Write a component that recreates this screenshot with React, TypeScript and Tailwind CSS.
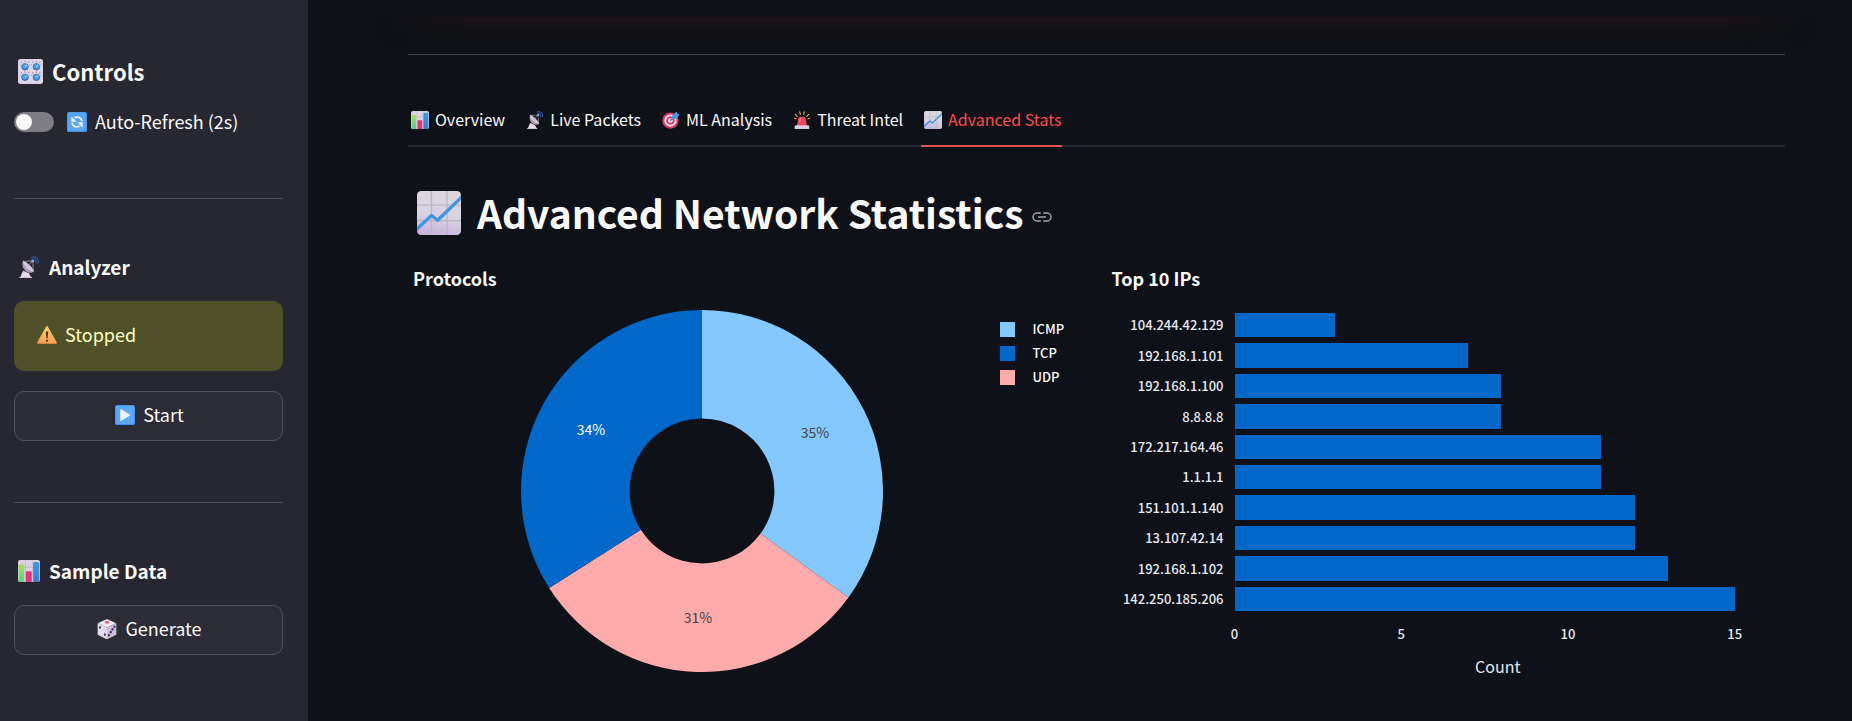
import React, { useState } from "react";

type IconProps = { className?: string };

function ChartUpIcon({ className }: IconProps) {
  return (
    <svg viewBox="0 0 32 32" className={className} aria-hidden="true">
      <defs>
        <linearGradient id="upBg" x1="0.6" y1="0" x2="0.4" y2="1">
          <stop offset="0" stopColor="#dcd8de" />
          <stop offset="0.6" stopColor="#d9d0e4" />
          <stop offset="1" stopColor="#c9b4dc" />
        </linearGradient>
        <clipPath id="upClip"><rect width="32" height="32" rx="3" /></clipPath>
      </defs>
      <g clipPath="url(#upClip)">
        <rect width="32" height="32" fill="url(#upBg)" />
        <path d="M10.5 0V32M21.8 0V32M0 10.3H32M0 21.6H32" stroke="#beb4c6" strokeWidth="1" />
        <path d="M-1 28.5L10.5 17.8L15 21.3L33 4" fill="none" stroke="#3d97dc" strokeWidth="2.4" strokeLinejoin="round" />
      </g>
    </svg>
  );
}

function BarsIcon({ className }: IconProps) {
  return (
    <svg viewBox="0 0 32 32" className={className} aria-hidden="true">
      <defs>
        <linearGradient id="barGreen" x1="0" y1="0" x2="0" y2="1">
          <stop offset="0" stopColor="#a5e14d" /><stop offset="1" stopColor="#4fd98c" />
        </linearGradient>
        <linearGradient id="barBlue" x1="0" y1="0" x2="0" y2="1">
          <stop offset="0" stopColor="#3b9ce2" /><stop offset="1" stopColor="#3f7bd0" />
        </linearGradient>
      </defs>
      <rect width="32" height="32" rx="3" fill="#dcd2e2" />
      <path d="M11 0V32M21.5 0V32M0 10.5H32" stroke="#bdb2c6" strokeWidth="1" />
      <path d="M1 8.5q0-1.5 1.500-1.500h5q1.500 0 1.500 1.500V32H3q-2 0-2-2z" fill="url(#barGreen)" />
      <path d="M11.500 18q0-1.500 1.500-1.500h5.500q1.500 0 1.500 1.500V32h-8.500z" fill="#e0347c" />
      <path d="M22 5q0-2 2-2h5q2 0 2 2v25q0 2-2 2h-7z" fill="url(#barBlue)" />
    </svg>
  );
}

function KnobsIcon({ className }: IconProps) {
  const knobs = [[9, 10], [23.5, 10], [9, 23.5], [23.5, 23.5]];
  return (
    <svg viewBox="0 0 32 32" className={className} aria-hidden="true">
      <rect width="32" height="32" rx="3" fill="#ddd0e6" />
      <rect x="1" y="1" width="30" height="30" rx="2.500" fill="#e1d6e8" />
      {knobs.map(([x, y]) => (
        <g key={`${x}-${y}`}>
          <path
            d={`M${x - 4} ${y - 5}l-.8-1.600M${x} ${y - 6}v-1.500M${x + 4} ${y - 5}l.8-1.600M${x - 5.500} ${y - 2}l-1-.8M${x + 5.500} ${y - 2}l1-.8`}
            stroke="#6a5f78" strokeWidth="1"
          />
          <circle cx={x} cy={y} r="4.600" fill="#2f73b8" />
          <circle cx={x} cy={y - 0.6} r="3.500" fill="#4a9ce0" />
          <path d={`M${x} ${y}l2-2`} stroke="#dff0ff" strokeWidth="1.200" strokeLinecap="round" />
        </g>
      ))}
    </svg>
  );
}

function RefreshIcon({ className }: IconProps) {
  return (
    <svg viewBox="0 0 32 32" className={className} aria-hidden="true">
      <rect width="32" height="32" rx="3" fill="#4596ee" />
      <rect x="1" y="1" width="29" height="29" rx="3" fill="#57a6f5" />
      <g fill="none" stroke="#f4f4ff" strokeWidth="3">
        <path d="M12 9.500C17 6.500 23 9 24 14.500" />
        <path d="M20 22.500C15 25.500 9 23 8 17.500" />
      </g>
      <path d="M7 7v8.500h8.500zM25 25v-8.500h-8.500z" fill="#f4f4ff" />
    </svg>
  );
}

function DishIcon({ className }: IconProps) {
  return (
    <svg viewBox="0 0 32 32" className={className} aria-hidden="true">
      <path d="M1.500 32q1-2 3-2.500l3-8.500 8 4 2.500 4.500q2 .5 2.500 2.500z" fill="#cfc3d8" />
      <path d="M6 24l10 1 2 5H4z" fill="#e6dcec" />
      <path d="M7.500 6.500C4.500 13 8 21 14 23.500c4 1.500 8 .5 9.500-1.500z" fill="#a79cae" />
      <path d="M7.500 6.500c5 2 14 10 16 15.500-4 .5-8-1.500-11.500-5S7 9.500 7.500 6.500z" fill="#d5c8dc" />
      <path d="M9 8l12.500-1L22 20M14 15l7.500-8" fill="none" stroke="#9d90a8" strokeWidth="1.200" />
      <circle cx="21.500" cy="7.500" r="2" fill="#8ab4da" />
      <path d="M20 1.800C25.500-.2 31 4 29 10.500M20.500 5c3.500-1.500 6.500 1 5.500 5" fill="none" stroke="#3156a8" strokeWidth="1.800" strokeLinecap="round" />
    </svg>
  );
}

function WarningIcon({ className }: IconProps) {
  return (
    <svg viewBox="0 0 32 32" className={className} aria-hidden="true">
      <defs>
        <linearGradient id="warn" x1="0" y1="0" x2="0" y2="1">
          <stop offset="0" stopColor="#ffd06a" /><stop offset="1" stopColor="#f79c4c" />
        </linearGradient>
      </defs>
      <path d="M14.500 2.600q1.500-2.200 3 0L31.500 27.500q1 2.500-1.500 2.500H2q-2.500 0-1.500-2.500z" fill="url(#warn)" />
      <path d="M14.200 11.500q0-1.500 1.800-1.500t1.800 1.500l-.5 8.500q-.1 1.300-1.300 1.300t-1.300-1.300z" fill="#4b3540" />
      <circle cx="16" cy="25" r="1.900" fill="#4b3540" />
    </svg>
  );
}

function PlayIcon({ className }: IconProps) {
  return (
    <svg viewBox="0 0 32 32" className={className} aria-hidden="true">
      <rect width="32" height="32" rx="3" fill="#3f8fea" />
      <rect x="1" y="1" width="29.500" height="29.500" rx="3" fill="#58a8f7" />
      <path d="M8.500 7.500q0-1.500 1.500-.8L23.500 15q1.200 1 0 2L10 25.300q-1.500.7-1.500-.8z" fill="#f6f4ff" />
    </svg>
  );
}

function DiceIcon({ className }: IconProps) {
  return (
    <svg viewBox="0 0 32 32" className={className} aria-hidden="true">
      <path d="M14.500.6q1.500-.7 3 0L30 6.500 16 14 2 6.500z" fill="#f1eaf3" />
      <path d="M2 6.500L16 14v18q-1 0-2-.5L2.500 26Q1 25.200 1 23.500V8q0-1 1-1.500z" fill="#e2dbe8" />
      <path d="M30 6.500L16 14v18q1 0 2-.5L29.500 26q1.500-.8 1.500-2.500V8q0-1-1-1.500z" fill="#cbbfdb" />
      <ellipse cx="16" cy="5" rx="3.500" ry="2" fill="#e8506e" />
      <g fill="#453368">
        <ellipse cx="4.800" cy="13.500" rx="1.500" ry="2.200" />
        <ellipse cx="12.500" cy="25" rx="1.600" ry="2.300" />
        <ellipse cx="28" cy="12.500" rx="1.700" ry="2.200" />
        <ellipse cx="24.800" cy="16.500" rx="1.700" ry="2.200" />
        <ellipse cx="22" cy="21" rx="1.700" ry="2.200" />
        <ellipse cx="19" cy="26" rx="1.700" ry="2.200" />
      </g>
    </svg>
  );
}

function TargetIcon({ className }: IconProps) {
  return (
    <svg viewBox="0 0 32 32" className={className} aria-hidden="true">
      <circle cx="15" cy="17" r="14.500" fill="#e03a68" />
      <circle cx="15" cy="17" r="10.800" fill="#f3dfea" />
      <circle cx="15" cy="17" r="7.600" fill="#e23c6c" />
      <circle cx="15" cy="17" r="4.200" fill="#f1dbe7" />
      <path d="M15 17L25 7.500" stroke="#2464b4" strokeWidth="2" />
      <path d="M17.500 9l5-4.500L25.500 1 27 4.500 31.500 6l-3.500 4-5 4.500-5-1z" fill="#3f9ce8" />
    </svg>
  );
}

function SirenIcon({ className }: IconProps) {
  return (
    <svg viewBox="0 0 32 32" className={className} aria-hidden="true">
      <path d="M4 6l3.500 3.500M28 6l-3.500 3.500M12 1.500l1 4.500M20 1.500L19 6M2.500 13l3 .8M29.500 13l-3 .8" stroke="#f2b53a" strokeWidth="2" strokeLinecap="round" />
      <path d="M7 26l2.500-13q.6-3 4-3h5q3.400 0 4 3L25 26z" fill="#f0405c" />
      <path d="M10.500 20l1.500-7q.4-1.500 2-1.500l-1 8.500z" fill="#ff8a98" />
      <path d="M3 31v-3q0-2.500 2.500-2.500h21q2.500 0 2.500 2.500v3q0 1-1 1H4q-1 0-1-1z" fill="#dccfe2" />
    </svg>
  );
}

function LinkIcon({ className }: IconProps) {
  return (
    <svg viewBox="0 0 20 10" className={className} fill="none" stroke="currentColor" strokeWidth="1.500" aria-hidden="true">
      <path d="M8.800 1H5a4 4 0 0 0 0 8h3.800M11.200 1H15a4 4 0 0 1 0 8h-3.800M6 5h8" />
    </svg>
  );
}

const TABS = [
  { label: "Overview", Icon: BarsIcon },
  { label: "Live Packets", Icon: DishIcon },
  { label: "ML Analysis", Icon: TargetIcon },
  { label: "Threat Intel", Icon: SirenIcon },
  { label: "Advanced Stats", Icon: ChartUpIcon },
];

const PROTOCOLS = [
  { name: "ICMP", share: 35, color: "#83c9ff", ink: "#444444" },
  { name: "UDP", share: 31, color: "#ffabab", ink: "#444444" },
  { name: "TCP", share: 34, color: "#0068c9", ink: "#ffffff" },
];

const LEGEND = ["ICMP", "TCP", "UDP"];

const IPS = [
  { ip: "104.244.42.129", count: 3 },
  { ip: "192.168.1.101", count: 7 },
  { ip: "192.168.1.100", count: 8 },
  { ip: "8.8.8.8", count: 8 },
  { ip: "172.217.164.46", count: 11 },
  { ip: "1.1.1.1", count: 11 },
  { ip: "151.101.1.140", count: 12 },
  { ip: "13.107.42.14", count: 12 },
  { ip: "192.168.1.102", count: 13 },
  { ip: "142.250.185.206", count: 15 },
];

const AXIS_MAX = 15 / 0.95;
const percent = (value: number) => `${(value / AXIS_MAX) * 100}%`;

function Donut() {
  const c = 181;
  const outer = 181;
  const inner = outer * 0.4;
  const labelRadius = outer * 0.7;
  const at = (share: number, r: number) => {
    const a = (share / 100) * Math.PI * 2;
    return [c + r * Math.sin(a), c - r * Math.cos(a)];
  };
  let start = 0;
  return (
    <svg viewBox="0 0 362 362" className="block size-[362px]" role="img" aria-label="Protocols">
      {PROTOCOLS.map((p) => {
        const end = start + p.share;
        const [x1, y1] = at(start, outer);
        const [x2, y2] = at(end, outer);
        const [x3, y3] = at(end, inner);
        const [x4, y4] = at(start, inner);
        const [lx, ly] = at(start + p.share / 2, labelRadius);
        start = end;
        return (
          <g key={p.name}>
            <path
              d={`M${x1} ${y1}A${outer} ${outer} 0 0 1 ${x2} ${y2}L${x3} ${y3}A${inner} ${inner} 0 0 0 ${x4} ${y4}Z`}
              fill={p.color}
            />
            <text x={lx} y={ly + 5} textAnchor="middle" fill={p.ink} className="text-[14px]">
              {p.share}%
            </text>
          </g>
        );
      })}
    </svg>
  );
}

function Sidebar() {
  const [auto, setAuto] = useState(false);
  const button =
    "flex h-[50px] w-full items-center justify-center gap-2 rounded-[10px] border border-[#51525b] bg-[#2b2c36] pb-[3px] pl-0.5 text-[18px]";
  return (
    <aside className="w-[308px] shrink-0 bg-[#262730] pt-[51px] pr-[25px] pl-[14px]">
      <h2 className="flex h-10 items-center gap-[9px] pl-1 text-[22px] font-bold">
        <KnobsIcon className="size-[25px]" />
        Controls
      </h2>
      <label className="mt-4 flex h-[30px] items-center text-[18px]">
        <input
          type="checkbox"
          role="switch"
          checked={auto}
          onChange={(e) => setAuto(e.target.checked)}
          className="flex h-5 w-10 appearance-none items-center rounded-full bg-[#7d7d83] px-0.5 before:block before:size-4 before:rounded-full before:bg-[#fafafa] checked:justify-end checked:bg-[#ff4b4b]"
        />
        <RefreshIcon className="mr-2 ml-[13px] size-5" />
        <span className="pb-0.5">Auto-Refresh (2s)</span>
      </label>
      <hr className="mt-[61px] border-[#4c4d55]" />

      <h3 className="mt-12 flex h-10 items-center gap-[9px] pl-1 text-[19px] font-bold">
        <DishIcon className="size-[22px]" />
        Analyzer
      </h3>
      <div role="alert" className="mt-[14px] flex h-[70px] items-center gap-2 rounded-[10px] bg-[#515129] pb-[3px] pl-[23px] text-[18px] text-[#ffffc2]">
        <WarningIcon className="size-5" />
        Stopped
      </div>
      <button type="button" className={`mt-5 ${button}`}>
        <PlayIcon className="size-5" />
        Start
      </button>
      <hr className="mt-[61px] border-[#4c4d55]" />

      <h3 className="mt-12 flex h-10 items-center gap-[9px] pl-1 text-[19px] font-bold">
        <BarsIcon className="size-[22px]" />
        Sample Data
      </h3>
      <button type="button" className={`mt-[14px] ${button}`}>
        <DiceIcon className="size-5" />
        Generate
      </button>
    </aside>
  );
}

export default function App() {
  const [active, setActive] = useState("Advanced Stats");
  return (
    <div className="flex min-h-screen bg-[#0e1117] font-['Noto_Sans_CJK_SC','Noto_Sans',sans-serif] text-[#fafafa]">
      <Sidebar />
      <main className="min-w-0 flex-1 pr-[67px] pl-[100px]">
        <div className="h-[54px] pt-[17px]">
          <div className="-mx-7 h-[27px] bg-linear-to-b from-[#1d1117] via-[#131214] via-40% to-[#0e1117] mask-x-from-94%" />
        </div>
        <hr className="border-[#3d4045]" />

        <div role="tablist" className="mt-[39px] flex h-[53px] gap-[18px] shadow-[inset_0_-2px_0_#262931]">
          {TABS.map(({ label, Icon }) => (
            <button
              key={label}
              type="button"
              role="tab"
              aria-selected={label === active}
              onClick={() => setActive(label)}
              className={
                label === active
                  ? "flex items-center gap-1.5 border-b-2 border-[#e05252] pl-[3px] text-[16px] text-[#ff4b4b]"
                  : "flex items-center gap-1.5 border-b-2 border-transparent pl-[3px] text-[16px]"
              }
            >
              <Icon className="size-[18px]" />
              <span className="pb-0.5">{label}</span>
            </button>
          ))}
        </div>

        <h1 className="mt-9 flex h-[60px] items-center pl-[9px] text-[39px] font-bold">
          <ChartUpIcon className="mr-4 size-[44px]" />
          <span className="pb-0.5">Advanced Network Statistics</span>
          <a href="#advanced-network-statistics" aria-label="Link to heading" className="ml-2 text-[#a0a2a6]">
            <LinkIcon className="mt-2 h-2.5 w-5" />
          </a>
        </h1>

        <div className="mt-[19px] grid grid-cols-2 gap-5">
          <section>
            <h2 className="h-8 pl-[5px] text-[18px] leading-8 font-bold">Protocols</h2>
            <div className="mt-4 flex">
              <div className="flex flex-1 justify-center">
                <Donut />
              </div>
              <ul className="mt-[7px] w-[90px] text-[13px] font-medium">
                {LEGEND.map((name) => (
                  <li key={name} className="flex h-6 items-center gap-[18px] pl-[3px]">
                    <span
                      className="size-[15px]"
                      style={{ backgroundColor: PROTOCOLS.find((p) => p.name === name)?.color }}
                    />
                    {name}
                  </li>
                ))}
              </ul>
            </div>
          </section>

          <section>
            <h2 className="h-8 pl-[5px] text-[18px] leading-8 font-bold">Top 10 IPs</h2>
            <div className="mt-4 flex pr-6 text-[#e6eaf1]">
              <ul className="flex h-[304px] w-32 flex-col pr-[11px] text-right text-[13px] font-medium">
                {IPS.map(({ ip }) => (
                  <li key={ip} className="flex flex-1 items-center justify-end">{ip}</li>
                ))}
              </ul>
              <div className="flex-1">
                <div className="flex h-[304px] flex-col">
                  {IPS.map(({ ip, count }) => (
                    <div key={ip} className="flex flex-1 items-center">
                      <div className="h-4/5 bg-[#0068c9]" style={{ width: percent(count) }} />
                    </div>
                  ))}
                </div>
                <div className="relative h-10 text-[13px] leading-10 font-medium">
                  {[0, 5, 10, 15].map((tick) => (
                    <span key={tick} className="absolute -translate-x-1/2" style={{ left: percent(tick) }}>
                      {tick}
                    </span>
                  ))}
                </div>
                <p className="text-center text-[16px] leading-6">Count</p>
              </div>
            </div>
          </section>
        </div>
      </main>
    </div>
  );
}
